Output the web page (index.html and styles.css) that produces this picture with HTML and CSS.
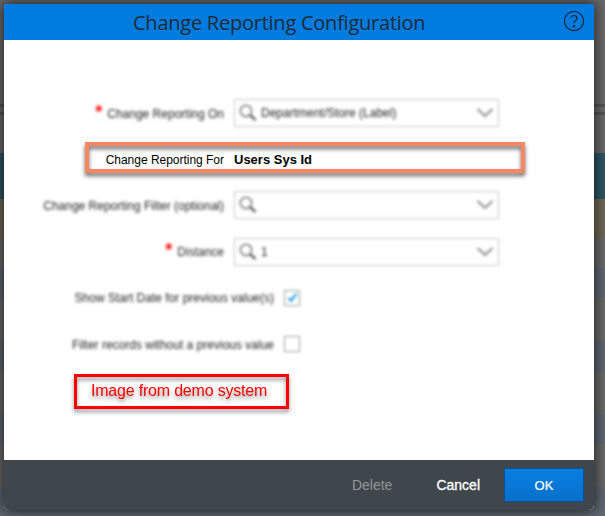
FILE: index.html
```
<!DOCTYPE html>
<html lang="en">
<head>
<meta charset="utf-8">
<title>Change Reporting Configuration</title>
<link rel="stylesheet" href="styles.css">
</head>
<body>
<svg class="symbols" width="0" height="0" aria-hidden="true">
  <symbol id="search" viewBox="0 0 18 18"><circle cx="7" cy="7" r="5.6" fill="none" stroke="#555" stroke-width="1.2"/><path d="M11 11l5.5 5" stroke="#444" stroke-width="2.3"/></symbol>
  <symbol id="chevron" viewBox="0 0 18 12"><path d="M1.500 2l7.500 7 7.500-7" fill="none" stroke="#888" stroke-width="2"/></symbol>
</svg>
<main class="dialog">
  <header class="header">
    <h1>Change Reporting Configuration</h1>
    <svg class="help" viewBox="0 0 22 22"><circle cx="11" cy="11" r="9.600"/><path d="M8 7.600q.6-1.900 3-1.900 3 0 3 2.500 0 1.400-1.700 2.500-1.300.8-1.300 2.500"/><circle class="dot" cx="11" cy="16.200" r="1.300"/></svg>
  </header>
  <section class="form">
    <div class="row soft"><label class="label"><i class="required">*</i><span>Change Reporting On</span></label><div class="field"><svg class="search"><use href="#search"/></svg><span>Department/Store (Label)</span><svg class="chevron"><use href="#chevron"/></svg></div></div>
    <div class="row clear"><label class="label">Change Reporting For</label><strong>Users Sys Id</strong><div class="highlight"></div></div>
    <div class="row soft"><label class="label">Change Reporting Filter (optional)</label><div class="field"><svg class="search"><use href="#search"/></svg><span></span><svg class="chevron"><use href="#chevron"/></svg></div></div>
    <div class="row soft"><label class="label"><i class="required">*</i><span>Distance</span></label><div class="field"><svg class="search"><use href="#search"/></svg><span>1</span><svg class="chevron"><use href="#chevron"/></svg></div></div>
    <div class="row soft wide"><label class="label">Show Start Date for previous value(s)</label><div class="check"><svg viewBox="0 0 16 16"><path d="M4 8l3 3 6-8"/></svg></div></div>
    <div class="row soft wide"><label class="label">Filter records without a previous value</label><div class="check"></div></div>
    <div class="note"><span>Image from demo system</span></div>
  </section>
  <footer class="footer"><button class="delete">Delete</button><button class="cancel">Cancel</button><button class="ok">OK</button></footer>
</main>
</body>
</html>
```
FILE: styles.css
```
* { box-sizing: border-box; }
body {
  margin: 0; height: 516px; padding: 4px 11px 6px 4px; overflow: hidden;
  font-family: "Liberation Sans", Arial, sans-serif;
  background: linear-gradient(#6a6a6a 0 104px, #565656 104px 107px, #6a6a6a 107px 112px, #565656 112px 115px, #6a6a6a 115px 153px, #2f5767 153px 199px, #706858 199px 238px, #6a6a6a 238px 268px, #5f6873 268px 298px, #6a6a6a 298px 341px, #5f6873 341px 371px, #6a6a6a 371px 414px, #5f6873 414px 444px, #6a6a6a 444px 487px, #5f6873 487px);
}
.symbols { position: absolute; }
.dialog {
  height: 506px; display: flex; flex-direction: column; background: #fff;
  border-radius: 0 0 5px 5px; box-shadow: 0 0 14px 1px rgba(0,0,0,.7);
}
.header { height: 36px; flex: none; background: #007be0; display: flex; align-items: center; padding: 0 9px 0 129px; }
.header h1 { margin: 1px auto 0 0; font: 400 20px/36px "Open Sans", sans-serif; letter-spacing: -.24px; color: #222c36; white-space: nowrap; }
.help { width: 22px; height: 22px; margin-bottom: 2px; fill: none; stroke: #12304d; stroke-width: 1.3; }
.help .dot { fill: #12304d; stroke: none; }
.form { flex: 1; padding-top: 50px; }
.row { height: 46.2px; display: flex; align-items: center; gap: 10px; position: relative; font-size: 12px; color: #222; white-space: nowrap; }
.label { width: 220px; display: flex; justify-content: flex-end; align-items: center; }
.wide .label { width: 270px; }
.soft > * { filter: blur(1.5px); }
.soft .label { padding-top: 1px; }
.required { color: #f00; font: bold 18px/20px "Liberation Sans", sans-serif; margin: -4px 5px 0 0; }
.field { width: 265px; height: 28px; border: 1px solid #c8c8c8; display: flex; align-items: center; padding: 0 4px; }
.field span { flex: 1; margin-left: 4px; }
.search { width: 18px; height: 18px; }
.chevron { width: 18px; height: 12px; }
.check { width: 16px; height: 16px; border: 1px solid #999; }
.check svg { display: block; width: 14px; height: 14px; fill: none; stroke: #159be0; stroke-width: 2.5; }
.clear { color: #000; }
.clear .label, .clear strong { padding-top: 1px; }
.clear .label { letter-spacing: -.02px; }
.clear strong { font-size: 13px; }
.highlight { position: absolute; left: 81px; top: 6px; width: 440px; height: 31px; border: 4px solid #f58860; filter: drop-shadow(0 3px 2px rgba(0,0,0,.6)); }
.note { width: 215px; height: 35px; margin: 7px 0 0 70px; padding-left: 14px; border: 3px solid #f00; color: #f00; font-size: 16px; letter-spacing: -.2px; line-height: 27px; filter: drop-shadow(0 3px 2px rgba(0,0,0,.45)); }
.footer { height: 50px; background: #3f464c; border-radius: 0 0 5px 5px; display: flex; justify-content: flex-end; align-items: center; padding-right: 10px; }
.footer button { border: 0; padding: 0; background: none; font: 14px "Liberation Sans", sans-serif; }
.footer .delete { color: #92979a; margin-right: 44px; }
.footer .cancel { color: #fff; margin-right: 24px; -webkit-text-stroke: .3px #fff; }
.footer .ok { width: 80px; height: 34px; color: #fff; font-size: 13px; border: 1px solid #07519a; background: linear-gradient(#087fe2, #0870cb); -webkit-text-stroke: .2px #fff; }
```
